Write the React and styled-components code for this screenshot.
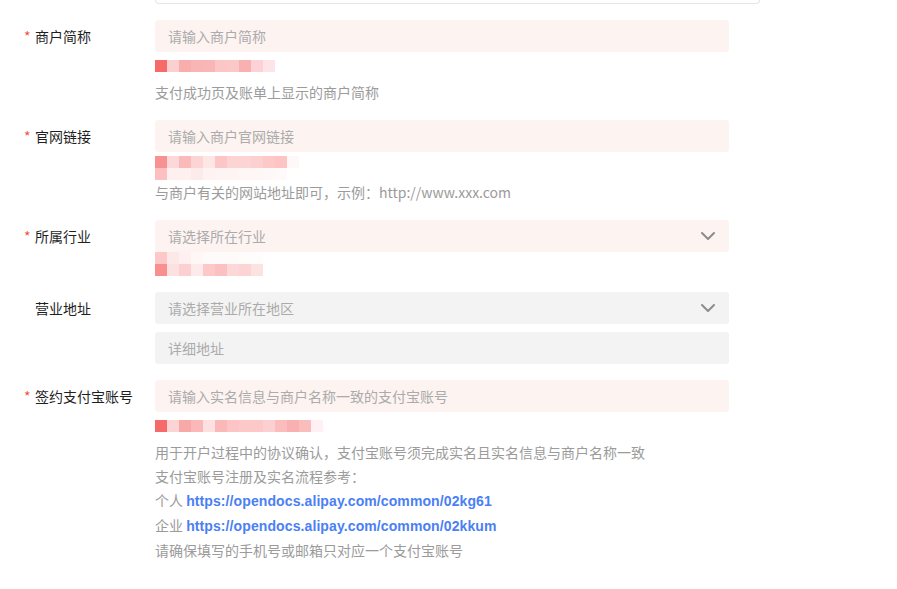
import React from "react";
import styled, { createGlobalStyle } from "styled-components";
import { ChevronDown } from "lucide-react";

const GlobalStyle = createGlobalStyle`
  body {
    margin: 0;
    background: #fff;
    font-family: "Noto Sans CJK SC", "Noto Sans", sans-serif;
  }
`;

// blurred error messages, one colour per 12px cell
const mosaics = {
  name: [
    ["#f76a6a", "#fdd0d0", "#f9aeae", "#f9b4b4", "#f9b6b6", "#fbc6c6", "#fbc8c8", "#f9b0b0", "#fcd2d6", "#fde4e6"],
  ],
  site: [
    ["#f89292", "#fdd8d8", "#fbbaba", "#fcd4d4", "#fde6e6", "#fcc6c6", "#fcd4d4", "#fcd4d4", "#fcd0d0", "#fcc8c8", "#fcc4c4", "#fff8f8"],
    ["#fcc0c0", "#fff0f0", "#fff0f0", "#fdeaea", "#fff2f2", "#fff4f4", "#fff4f4", "#fff6f6", "#fff6f6", "#fff8f8", "#fffafa", "#ffffff"],
  ],
  trade: [
    ["#fcc8c8", "#fde8e8", "#fef0f0", "#fff6f6", "#fffafa", "#fffafa", "#fffafa", "#fffcfc", "#fffcfc"],
    ["#f89090", "#fde0e0", "#fcd0d0", "#fdeaea", "#fcc8c8", "#fbc0c0", "#fcd8d8", "#fcd4d4", "#fde2e2"],
  ],
  account: [
    ["#f66a6a", "#fdd4d4", "#f9a8a8", "#fab8b8", "#fde0e0", "#fab8b8", "#fcc4c4", "#fcc8c8", "#fcc8c8", "#fcd0d0", "#fbbcbc", "#f8b0b0", "#fbbcbc", "#fff0f4"],
  ],
};

const Mosaic = ({ rows, top = 0 }) => {
  const width = Math.max(...rows.map((r) => r.length)) * 12;
  return (
    <MosaicBox style={{ paddingTop: top }}>
      <svg width={width} height={rows.length * 12}>
        {rows.map((row, y) =>
          row.map((c, x) => (
            <rect key={`${y}-${x}`} x={x * 12} y={y * 12} width="12" height="12" fill={c} />
          ))
        )}
      </svg>
    </MosaicBox>
  );
};

const Field = ({ placeholder, select, tone }) => (
  <InputBox tone={tone}>
    <span>{placeholder}</span>
    {select && <ChevronDown size={24} strokeWidth={2} color="#8c8c8c" />}
  </InputBox>
);

const App = () => {
  return (
    <>
      <GlobalStyle />
      <Page>
        <TopEdge />

        <Item>
          <Label required>商户简称</Label>
          <Control>
            <Field placeholder="请输入商户简称" tone="error" />
            <Mosaic rows={mosaics.name} top={8} />
            <Help>支付成功页及账单上显示的商户简称</Help>
          </Control>
        </Item>

        <Item>
          <Label required>官网链接</Label>
          <Control>
            <Field placeholder="请输入商户官网链接" tone="error" />
            <Mosaic rows={mosaics.site} top={4} />
            <Help>与商户有关的网站地址即可，示例：http://www.xxx.com</Help>
          </Control>
        </Item>

        <Item>
          <Label required>所属行业</Label>
          <Control>
            <Field placeholder="请选择所在行业" tone="error" select />
            <Mosaic rows={mosaics.trade} top={0} />
          </Control>
        </Item>

        <Item>
          <Label>营业地址</Label>
          <Control gap={8}>
            <Field placeholder="请选择营业所在地区" select />
            <Field placeholder="详细地址" />
          </Control>
        </Item>

        <Item>
          <Label required>签约支付宝账号</Label>
          <Control>
            <Field placeholder="请输入实名信息与商户名称一致的支付宝账号" tone="error" />
            <Mosaic rows={mosaics.account} top={8} />
            <Help>
              <p>用于开户过程中的协议确认，支付宝账号须完成实名且实名信息与商户名称一致</p>
              <p>支付宝账号注册及实名流程参考：</p>
              <p>
                个人 <Link>https://opendocs.alipay.com/common/02kg61</Link>
              </p>
              <p>
                企业 <Link>https://opendocs.alipay.com/common/02kkum</Link>
              </p>
              <p>请确保填写的手机号或邮箱只对应一个支付宝账号</p>
            </Help>
          </Control>
        </Item>
      </Page>
    </>
  );
};

export default App;

const Page = styled.div`
  width: 897px;
  height: 589px;
  overflow: hidden;
  padding-left: 24px;
  box-sizing: border-box;
`;

const TopEdge = styled.div`
  width: 603px;
  height: 3px;
  margin-left: 131px;
  margin-bottom: 16px;
  border: 1px solid #e6e6e6;
  border-top: none;
  border-radius: 0 0 5px 5px;
`;

const Item = styled.div`
  display: grid;
  grid-template-columns: 131px 574px;
  margin-bottom: 16px;
`;

const Label = styled.div`
  height: 32px;
  display: flex;
  align-items: center;
  font-size: 14px;
  color: #1f1f1f;
  &::before {
    content: "*";
    width: 11px;
    color: #f4523b;
    font-size: 14px;
    visibility: ${(p) => (p.required ? "visible" : "hidden")};
  }
`;

const Control = styled.div`
  display: flex;
  flex-direction: column;
  gap: ${(p) => p.gap || 0}px;
`;

const InputBox = styled.div`
  height: 32px;
  display: flex;
  align-items: center;
  justify-content: space-between;
  padding: 0 9px 0 13px;
  border-radius: 3px;
  background: ${(p) => (p.tone === "error" ? "#fdf3f1" : "#f3f3f3")};
  font-size: 14px;
  color: #ababab;
`;

const MosaicBox = styled.div`
  height: 24px;
  box-sizing: border-box;
  line-height: 0;
  svg {
    display: block;
  }
`;

const Help = styled.div`
  margin-top: 4px;
  font-size: 14px;
  line-height: 24px;
  color: #9b9b9b;
  p {
    margin: 0;
  }
`;

const Link = styled.a`
  font-family: "Liberation Sans", Arial, sans-serif;
  font-weight: 700;
  letter-spacing: 0.1px;
  color: #4a80f4;
  text-decoration: none;
`;
